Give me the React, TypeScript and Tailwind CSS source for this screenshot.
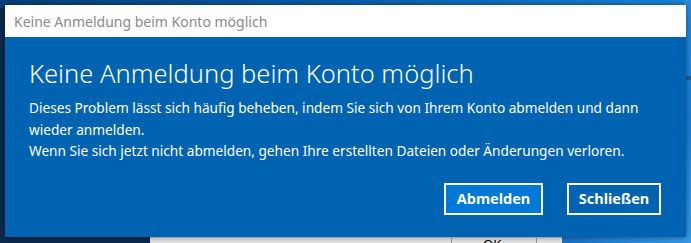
import React from "react";

export default function App() {
  return (
    <div
      className="relative w-[691px] h-[243px] overflow-hidden bg-[#0c2a4e]"
      style={{ fontFamily: '"Noto Sans", "Open Sans", sans-serif' }}
    >
      {/* desktop top gradient */}
      <div className="absolute left-0 top-0 w-full h-[8px] bg-gradient-to-r from-[#0a3f7a] via-[#0d5fb0] to-[#1a86dc]" />
      {/* desktop right edge */}
      <div className="absolute right-0 top-0 w-[8px] h-full bg-gradient-to-b from-[#2a8de0] via-[#1c7fd6] to-[#3a9be6]">
        <div className="mt-[76px] h-[4px] bg-[#1f5a9a]" />
      </div>
      {/* window behind at bottom */}
      <div className="absolute left-[150px] top-[237px] w-[412px] h-[10px] bg-[#e6e6e6] border-t border-[#cfcfcf]">
        <div className="absolute left-[301px] top-0 w-px h-full bg-[#9a9a9a]" />
        <div className="absolute left-[386px] top-0 w-px h-full bg-[#9a9a9a]" />
        <div className="absolute left-[333px] top-[-1px] text-[13px] leading-[14px] text-black">OK</div>
      </div>
      <div className="absolute left-[562px] top-[237px] w-[130px] h-[10px] bg-gradient-to-r from-[#1a72c8] to-[#3a9be6]" />

      {/* dialog */}
      <div className="absolute left-[5px] top-[5px] w-[681px] h-[232px] flex flex-col shadow-[0_0_6px_rgba(0,0,0,0.5)]">
        <div className="h-[32px] bg-white flex items-center pl-[9px] text-[14px] text-[#8a8a8a]">
          Keine Anmeldung beim Konto möglich
        </div>
        <div className="flex-1 bg-[#0063b1] flex flex-col pl-[24px] pr-[24px] text-white">
          <div className="mt-[20px] text-[25.5px] leading-[32px] font-light">
            Keine Anmeldung beim Konto möglich
          </div>
          <div className="mt-[8px] text-[13.65px] leading-[21.5px]">
            <div>
              Dieses Problem lässt sich häufig beheben, indem Sie sich von Ihrem Konto abmelden und dann
              wieder anmelden.
            </div>
            <div>Wenn Sie sich jetzt nicht abmelden, gehen Ihre erstellten Dateien oder Änderungen verloren.</div>
          </div>
          <div className="mt-[21px] flex justify-end gap-[24px] pr-[1px]">
            <button className="w-[99px] h-[32px] border-2 border-white bg-[#0078d7] text-[14.5px] font-bold text-white">
              Abmelden
            </button>
            <button className="w-[94px] h-[32px] border-2 border-white bg-[#0063b1] text-[14.5px] font-bold text-white">
              Schließen
            </button>
          </div>
        </div>
      </div>
    </div>
  );
}
